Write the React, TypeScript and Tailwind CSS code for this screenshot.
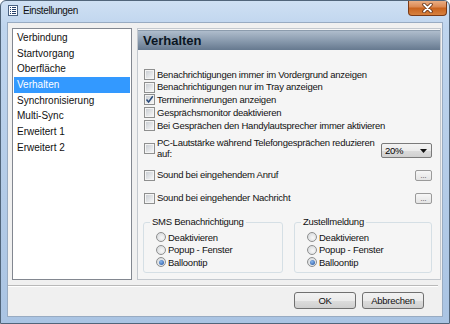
import React from "react";

const F = "font-['Liberation_Sans',Arial,sans-serif]";

function Check({ checked }: { checked?: boolean }) {
  return (
    <span className="relative flex h-[11px] w-[11px] shrink-0 items-center justify-center border border-[#8e8f8f] bg-[#f4f4f4]">
      <span className="h-[7px] w-[7px] bg-[linear-gradient(135deg,#cbcfd4,#f4f5f6)]" />
      {checked && (
        <svg className="absolute left-[0px] top-[0px]" width="9" height="9" viewBox="0 0 9 9">
          <path d="M1.5 4.5 L3.6 7 L7.8 1.2" fill="none" stroke="#2a4a7a" strokeWidth="1.5" />
        </svg>
      )}
    </span>
  );
}

function Radio({ checked }: { checked?: boolean }) {
  return (
    <span className="flex h-[10px] w-[10px] shrink-0 items-center justify-center rounded-full border border-[#8e8f8f] bg-[radial-gradient(circle_at_60%_60%,#f8f8f8,#d0d3d6)]">
      {checked && (
        <span className="h-[5px] w-[5px] rounded-full bg-[radial-gradient(circle_at_40%_35%,#8ab8ee,#1f4f9c)]" />
      )}
    </span>
  );
}

function CheckRow({ label, checked }: { label: string; checked?: boolean }) {
  return (
    <div className="flex h-[12.75px] items-center gap-[2px]">
      <Check checked={checked} />
      <span className="whitespace-nowrap leading-none">{label}</span>
    </div>
  );
}

function DotsButton() {
  return (
    <div className="flex h-[11px] w-[17px] items-end justify-center rounded-[2px] border border-[#9a9a9a] bg-[linear-gradient(to_bottom,#f6f6f6,#e4e4e4)] pb-[1px] text-[7px] leading-none tracking-normal text-[#333]">
      ...
    </div>
  );
}

function Group({ title, w }: { title: string; w: string }) {
  return (
    <fieldset className={`${w} h-[57px] rounded-[3px] border border-[#d5dfe5] pl-[12px] pt-[3px]`}>
      <legend className="-ml-[6px] px-[2px] leading-[12px]">{title}</legend>
      {[
        ["Deaktivieren", false],
        ["Popup - Fenster", false],
        ["Balloontip", true],
      ].map(([l, c]) => (
        <div key={l as string} className="flex h-[12.5px] items-center gap-[2px]">
          <Radio checked={c as boolean} />
          <span className="leading-none">{l as string}</span>
        </div>
      ))}
    </fieldset>
  );
}

export default function App() {
  const items = [
    "Verbindung",
    "Startvorgang",
    "Oberfläche",
    "Verhalten",
    "Synchronisierung",
    "Multi-Sync",
    "Erweitert 1",
    "Erweitert 2",
  ];
  return (
    <div
      className={`${F} flex h-[324px] w-[450px] flex-col overflow-hidden rounded-t-[6px] border border-[#51657a] bg-[linear-gradient(to_bottom,#cfe0f3_0%,#bfd5ee_8%,#b3cbe7_60%,#aac4e3_100%)] text-[#111]`}
    >
      {/* Title bar */}
      <div className="flex h-[21px] items-start">
        <div className="ml-[7px] mt-[4px]">
          <svg width="10" height="11" viewBox="0 0 10 11">
            <rect x="0.5" y="0.5" width="9" height="10" fill="#fbfcfe" stroke="#4a6282" />
            <rect x="2" y="2" width="1" height="1" fill="#24406a" />
            <rect x="4" y="2" width="4" height="1" fill="#24406a" />
            <rect x="2" y="4" width="1" height="1" fill="#24406a" />
            <rect x="4" y="4" width="4" height="1" fill="#24406a" />
            <rect x="2" y="6" width="1" height="1" fill="#24406a" />
            <rect x="4" y="6" width="4" height="1" fill="#24406a" />
            <rect x="2" y="8" width="1" height="1" fill="#24406a" />
            <rect x="4" y="8" width="4" height="1" fill="#24406a" />
          </svg>
        </div>
        <div className="ml-[5px] mt-[4px] text-[10px] leading-[12px] tracking-[-0.4px] text-[#111]">Einstellungen</div>
        <div className="ml-auto mr-[2px] -mt-[1px] flex h-[16px] w-[39px] items-center justify-center rounded-b-[4px] border border-t-0 border-[#7b3a16] bg-[linear-gradient(to_bottom,#ecb48c_0%,#dc8a55_45%,#c9631f_55%,#d7823f_100%)]">
          <svg width="11" height="10" viewBox="0 0 11 10">
            <path d="M2 1.5 L9 8.5 M9 1.5 L2 8.5" stroke="#5a2a10" strokeWidth="3.4" strokeLinecap="round" />
            <path d="M2 1.5 L9 8.5 M9 1.5 L2 8.5" stroke="#ffffff" strokeWidth="1.8" strokeLinecap="round" />
          </svg>
        </div>
      </div>

      {/* Client area */}
      <div className="mx-[6px] flex h-[295px] w-[436px] flex-col border border-[#98abc2] bg-[#f0f0f0]">
        <div className="flex pl-[4px] pt-[5px]">
          {/* List */}
          <div className="h-[252px] w-[120px] border border-[#828790] bg-white px-[1px] pt-[1px] text-[10px]">
            {items.map((it) => (
              <div
                key={it}
                className={`flex h-[15.7px] items-center pl-[3px] leading-none ${
                  it === "Verhalten" ? "bg-[#3399ff] text-white" : "text-[#111]"
                }`}
              >
                {it}
              </div>
            ))}
          </div>

          {/* Panel */}
          <div className="ml-[5px] h-[252px] w-[304px] border border-[#c3c8ce] bg-[#f5f5f5] pt-[1px]">
            <div className="flex h-[20px] items-center border-t border-[#8c9cad] bg-[linear-gradient(to_bottom,#afbdcc_0%,#8e9fb2_45%,#66798f_100%)] pl-[5px] text-[13px] font-bold text-[#0a1522]">
              Verhalten
            </div>
            <div className="flex flex-col pl-[6px] pr-[8px] pt-[18px] text-[9.5px] tracking-[-0.25px]">
              <CheckRow label="Benachrichtigungen immer im Vordergrund anzeigen" />
              <CheckRow label="Benachrichtigungen nur im Tray anzeigen" />
              <CheckRow label="Terminerinnerungen anzeigen" checked />
              <CheckRow label="Gesprächsmonitor deaktivieren" />
              <CheckRow label="Bei Gesprächen den Handylautsprecher immer aktivieren" />

              <div className="mt-[5.25px] flex h-[22px] items-center gap-[2px]">
                <Check />
                <span className="leading-[11px]">
                  PC-Lautstärke während Telefongesprächen reduzieren
                  <br />
                  auf:
                </span>
                <div className="ml-auto mt-[6px] flex h-[15px] w-[51px] items-center self-start rounded-[2px] border border-[#7a7a7a] bg-[linear-gradient(to_bottom,#f3f3f3_0%,#ebebeb_50%,#dcdcdc_51%,#d0d0d0_100%)] pl-[3px] pr-[4px] text-black">
                  <span className="leading-none">20%</span>
                  <svg className="ml-auto" width="7" height="4" viewBox="0 0 7 4">
                    <path d="M0 0 L7 0 L3.5 4 Z" fill="#111" />
                  </svg>
                </div>
              </div>

              <div className="mt-[10px] flex h-[12px] items-center gap-[2px]">
                <Check />
                <span className="leading-none">Sound bei eingehendem Anruf</span>
                <div className="ml-auto">
                  <DotsButton />
                </div>
              </div>

              <div className="mt-[11px] flex h-[12px] items-center gap-[2px]">
                <Check />
                <span className="leading-none">Sound bei eingehender Nachricht</span>
                <div className="ml-auto">
                  <DotsButton />
                </div>
              </div>

              <div className="-ml-[1px] mt-[12px] flex gap-[11px]">
                <Group title="SMS Benachrichtigung" w="w-[140px]" />
                <Group title="Zustellmeldung" w="w-[138px]" />
              </div>
            </div>
          </div>
        </div>

        {/* Separator */}
        <div className="mt-[5px] w-[430px] border-t border-b border-t-[#b9b9b9] border-b-white" />

        {/* Buttons */}
        <div className="mt-[5px] flex justify-end gap-[6px] pr-[18px] text-[9.5px] tracking-[-0.25px]">
          {["OK", "Abbrechen"].map((b) => (
            <div
              key={b}
              className="flex h-[17px] w-[62px] items-center justify-center rounded-[3px] border border-[#707070] bg-[linear-gradient(to_bottom,#f2f2f2_0%,#ebebeb_50%,#dddddd_51%,#cfcfcf_100%)] leading-none text-[#111]"
            >
              {b}
            </div>
          ))}
        </div>
      </div>
    </div>
  );
}
